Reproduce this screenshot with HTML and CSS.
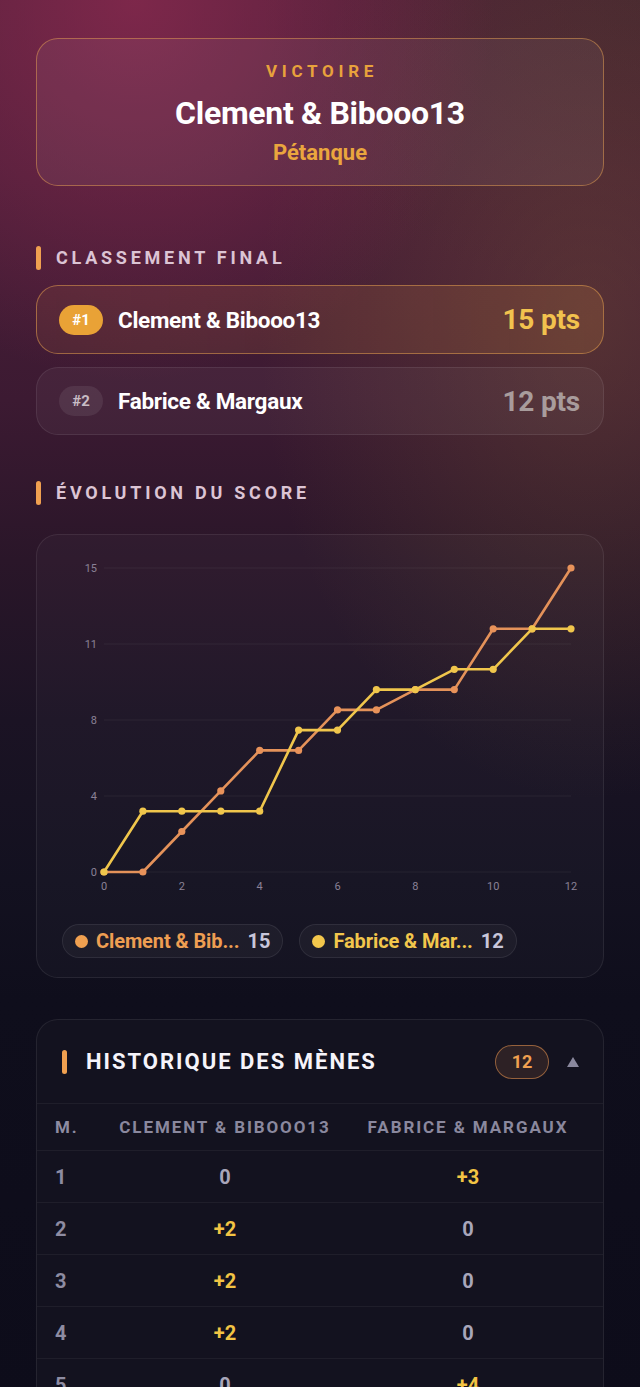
FILE: index.html
```html
<!DOCTYPE html>
<html lang="fr">
<head>
<meta charset="utf-8">
<title>Victoire - Pétanque</title>
<link rel="stylesheet" href="styles.css">
</head>
<body>
<main class="page">
  <section class="hero">
    <div class="hero-label">VICTOIRE</div>
    <div class="hero-title">Clement &amp; Bibooo13</div>
    <div class="hero-sub">Pétanque</div>
  </section>

  <h2 class="section-title s-rank"><span class="bar"></span>CLASSEMENT FINAL</h2>
  <div class="ranking">
    <div class="rank-row first">
      <span class="rank-badge">#1</span>
      <span class="rank-name">Clement &amp; Bibooo13</span>
      <span class="rank-pts">15 pts</span>
    </div>
    <div class="rank-row second">
      <span class="rank-badge">#2</span>
      <span class="rank-name">Fabrice &amp; Margaux</span>
      <span class="rank-pts">12 pts</span>
    </div>
  </div>

  <h2 class="section-title s-evo"><span class="bar"></span>ÉVOLUTION DU SCORE</h2>
  <div class="chart-card">
    <svg class="chart" width="566" height="366" viewBox="0 0 566 366">
      <g class="grid">
        <line x1="67" y1="33" x2="534" y2="33"/>
        <line x1="67" y1="109" x2="534" y2="109"/>
        <line x1="67" y1="185" x2="534" y2="185"/>
        <line x1="67" y1="261" x2="534" y2="261"/>
        <line x1="67" y1="337" x2="534" y2="337"/>
      </g>
      <g class="ylab">
        <text x="60" y="37">15</text>
        <text x="60" y="113">11</text>
        <text x="60" y="189">8</text>
        <text x="60" y="265">4</text>
        <text x="60" y="341">0</text>
      </g>
      <g class="xlab">
        <text x="67" y="355">0</text>
        <text x="144.8" y="355">2</text>
        <text x="222.7" y="355">4</text>
        <text x="300.5" y="355">6</text>
        <text x="378.3" y="355">8</text>
        <text x="456.2" y="355">10</text>
        <text x="534" y="355">12</text>
      </g>
      <polyline class="line orange" points="67,337 105.9,337 144.8,296.5 183.8,255.9 222.7,215.4 261.6,215.4 300.5,174.9 339.4,174.9 378.3,154.6 417.3,154.6 456.2,93.8 495.1,93.8 534,33"/>
      <g class="dots orange-dots">
        <circle cx="67" cy="337" r="3.6"/><circle cx="105.9" cy="337" r="3.6"/><circle cx="144.8" cy="296.5" r="3.6"/><circle cx="183.8" cy="255.9" r="3.6"/><circle cx="222.7" cy="215.4" r="3.6"/><circle cx="261.6" cy="215.4" r="3.6"/><circle cx="300.5" cy="174.9" r="3.6"/><circle cx="339.4" cy="174.9" r="3.6"/><circle cx="378.3" cy="154.6" r="3.6"/><circle cx="417.3" cy="154.6" r="3.6"/><circle cx="456.2" cy="93.8" r="3.6"/><circle cx="495.1" cy="93.8" r="3.6"/><circle cx="534" cy="33" r="3.6"/>
      </g>
      <polyline class="line yellow" points="67,337 105.9,276.2 144.8,276.2 183.8,276.2 222.7,276.2 261.6,195.1 300.5,195.1 339.4,154.6 378.3,154.6 417.3,134.3 456.2,134.3 495.1,93.8 534,93.8"/>
      <g class="dots yellow-dots">
        <circle cx="67" cy="337" r="3.6"/><circle cx="105.9" cy="276.2" r="3.6"/><circle cx="144.8" cy="276.2" r="3.6"/><circle cx="183.8" cy="276.2" r="3.6"/><circle cx="222.7" cy="276.2" r="3.6"/><circle cx="261.6" cy="195.1" r="3.6"/><circle cx="300.5" cy="195.1" r="3.6"/><circle cx="339.4" cy="154.6" r="3.6"/><circle cx="378.3" cy="154.6" r="3.6"/><circle cx="417.3" cy="134.3" r="3.6"/><circle cx="456.2" cy="134.3" r="3.6"/><circle cx="495.1" cy="93.8" r="3.6"/><circle cx="534" cy="93.8" r="3.6"/>
      </g>
    </svg>
    <div class="legend">
      <div class="pill pill-orange"><span class="dot"></span><span class="pill-name">Clement &amp; Bib...</span><span class="pill-val">15</span></div>
      <div class="pill pill-yellow"><span class="dot"></span><span class="pill-name">Fabrice &amp; Mar...</span><span class="pill-val">12</span></div>
    </div>
  </div>

  <section class="history">
    <div class="history-head">
      <span class="bar"></span>
      <span class="history-title">HISTORIQUE DES MÈNES</span>
      <span class="count">12</span>
      <svg class="caret" width="12" height="10" viewBox="0 0 12 10"><polygon points="6,0 12,10 0,10"/></svg>
    </div>
    <div class="table">
      <div class="tr th"><span class="c1">M.</span><span class="c2">CLEMENT &amp; BIBOOO13</span><span class="c3">FABRICE &amp; MARGAUX</span></div>
      <div class="tr"><span class="c1">1</span><span class="c2">0</span><span class="c3 win">+3</span></div>
      <div class="tr"><span class="c1">2</span><span class="c2 win">+2</span><span class="c3">0</span></div>
      <div class="tr"><span class="c1">3</span><span class="c2 win">+2</span><span class="c3">0</span></div>
      <div class="tr"><span class="c1">4</span><span class="c2 win">+2</span><span class="c3">0</span></div>
      <div class="tr"><span class="c1">5</span><span class="c2">0</span><span class="c3 win">+4</span></div>
      <div class="tr"><span class="c1">6</span><span class="c2 win">+2</span><span class="c3">0</span></div>
      <div class="tr"><span class="c1">7</span><span class="c2">0</span><span class="c3 win">+2</span></div>
      <div class="tr"><span class="c1">8</span><span class="c2 win">+1</span><span class="c3">0</span></div>
      <div class="tr"><span class="c1">9</span><span class="c2">0</span><span class="c3 win">+1</span></div>
      <div class="tr"><span class="c1">10</span><span class="c2 win">+3</span><span class="c3">0</span></div>
      <div class="tr"><span class="c1">11</span><span class="c2">0</span><span class="c3 win">+2</span></div>
      <div class="tr"><span class="c1">12</span><span class="c2 win">+3</span><span class="c3">0</span></div>
    </div>
  </section>
</main>
</body>
</html>
```

FILE: styles.css
```css
* { box-sizing: border-box; }
html, body { margin: 0; padding: 0; }
body {
  font-family: Roboto, "Liberation Sans", sans-serif;
  color: #fff;
  min-height: 1387px;
  background-color: #0d0c1a;
  background-image:
    radial-gradient(ellipse 360px 380px at 21% 0px, rgba(140, 42, 80, 0.75), rgba(140, 42, 80, 0) 100%),
    radial-gradient(ellipse 330px 480px at 92% 320px, rgba(130, 95, 52, 0.32), rgba(130, 95, 52, 0) 100%),
    radial-gradient(ellipse 380px 300px at 100% 0px, rgba(60, 42, 40, 0.55), rgba(60, 42, 40, 0) 100%),
    linear-gradient(180deg, #50203a 0px, #4a1e38 180px, #3c1a32 400px, #2a1629 560px, #1b1324 720px, #131120 880px, #0f0e1c 1000px, #0d0c1a 1400px);
  background-repeat: no-repeat;
}

.page {
  padding: 38px 36px 40px;
  display: flex;
  flex-direction: column;
}

/* Hero */
.hero {
  height: 148px;
  border: 1px solid rgba(230, 160, 80, 0.5);
  border-radius: 22px;
  background: rgba(255, 255, 255, 0.055);
  display: flex;
  flex-direction: column;
  align-items: center;
  padding-top: 22px;
}
.hero-label {
  font-size: 17px;
  font-weight: 700;
  letter-spacing: 4.7px;
  color: #e8a23c;
  line-height: 20px;
  padding-left: 4px;
}
.hero-title {
  font-size: 32px;
  font-weight: 700;
  line-height: 38px;
  margin-top: 13px;
  letter-spacing: -0.3px;
}
.hero-sub {
  font-size: 22px;
  font-weight: 700;
  color: #eaa63e;
  line-height: 26px;
  margin-top: 8px;
}

/* Section titles */
.section-title {
  display: flex;
  align-items: center;
  gap: 15px;
  margin: 0;
  font-size: 18px;
  font-weight: 700;
  letter-spacing: 3.75px;
  color: #dcc4d4;
  line-height: 24px;
}
.bar {
  display: inline-block;
  width: 5px;
  height: 24px;
  border-radius: 3px;
  background: #f0a050;
  flex: none;
}
.s-rank { margin-top: 60px; }
.s-evo { margin-top: 46px; }

/* Ranking */
.ranking {
  display: flex;
  flex-direction: column;
  gap: 13px;
  margin-top: 15px;
}
.rank-row {
  height: 69px;
  border-radius: 22px;
  display: flex;
  align-items: center;
  padding: 0 23px 0 22px;
}
.rank-row.first {
  border: 1px solid rgba(235, 165, 80, 0.5);
  background: linear-gradient(90deg, rgba(240, 150, 70, 0.09), rgba(240, 160, 70, 0.15));
}
.rank-row.second {
  height: 68px;
  border: 1px solid rgba(255, 255, 255, 0.08);
  background: rgba(255, 255, 255, 0.045);
}
.rank-badge {
  width: 44px;
  height: 30px;
  border-radius: 15px;
  display: flex;
  align-items: center;
  justify-content: center;
  font-size: 15px;
  font-weight: 700;
  flex: none;
}
.first .rank-badge { background: #e9a236; color: #fff; }
.second .rank-badge { background: rgba(255, 255, 255, 0.08); color: #c8bcc4; }
.rank-name {
  margin-left: 15px;
  font-size: 22.5px;
  font-weight: 700;
  flex: 1;
  letter-spacing: -0.3px;
}
.rank-pts {
  font-size: 28px;
  font-weight: 700;
  letter-spacing: -0.2px;
}
.first .rank-pts { color: #f2c24e; }
.second .rank-pts { color: #a89c9c; }

/* Chart */
.chart-card {
  margin-top: 29px;
  height: 444px;
  border-radius: 22px;
  border: 1px solid rgba(255, 255, 255, 0.08);
  background: rgba(255, 255, 255, 0.025);
  display: flex;
  flex-direction: column;
}
.chart { display: block; }
.grid line { stroke: rgba(255, 255, 255, 0.06); stroke-width: 1; }
.ylab text { fill: #8a8196; font-size: 11px; text-anchor: end; font-family: Roboto, sans-serif; }
.xlab text { fill: #8a8196; font-size: 11px; text-anchor: middle; font-family: Roboto, sans-serif; }
.line { fill: none; stroke-width: 2.6; stroke-linejoin: round; stroke-linecap: round; }
.line.orange { stroke: #e4925a; }
.line.yellow { stroke: #f0c64c; }
.orange-dots circle { fill: #e8925a; }
.yellow-dots circle { fill: #f0c64c; }

.legend {
  display: flex;
  gap: 16px;
  padding: 23px 0 0 25px;
}
.pill {
  height: 34px;
  border-radius: 17px;
  border: 1px solid rgba(255, 255, 255, 0.08);
  background: rgba(255, 255, 255, 0.035);
  display: flex;
  align-items: center;
  padding: 0 12px 0 12px;
  font-size: 20px;
  font-weight: 700;
}
.dot {
  width: 13px;
  height: 13px;
  border-radius: 50%;
  flex: none;
  margin-right: 8px;
}
.pill-name {
  white-space: nowrap;
  letter-spacing: -0.1px;
}
.pill-val { margin-left: 8px; color: #c8c6da; }
.pill-orange .dot { background: #f0a050; }
.pill-orange .pill-name { color: #ee9e52; }
.pill-yellow .dot { background: #f2c64c; }
.pill-yellow .pill-name { color: #f2c64c; }

/* History */
.history {
  margin-top: 41px;
  border-radius: 22px 22px 0 0;
  border: 1px solid rgba(255, 255, 255, 0.08);
  background: #13121f;
}
.history-head {
  height: 83px;
  display: flex;
  align-items: center;
  padding: 0 24px 0 25px;
}
.history-title {
  margin-left: 19px;
  font-size: 22px;
  font-weight: 700;
  letter-spacing: 2px;
  color: #f6f4fa;
  flex: 1;
}
.count {
  width: 54px;
  height: 34px;
  border-radius: 17px;
  border: 1px solid rgba(235, 150, 80, 0.55);
  background: rgba(235, 150, 80, 0.12);
  color: #f0a050;
  font-size: 18px;
  font-weight: 700;
  display: flex;
  align-items: center;
  justify-content: center;
}
.caret {
  margin-left: 18px;
  fill: #8a889e;
  display: block;
}
.table { display: flex; flex-direction: column; }
.tr {
  display: grid;
  grid-template-columns: 70px 236px 250px;
  align-items: center;
  height: 52px;
  border-top: 1px solid rgba(255, 255, 255, 0.05);
  font-size: 20px;
  font-weight: 700;
  color: #a8a6ba;
}
.tr.th {
  height: 47px;
  font-size: 17px;
  letter-spacing: 1.9px;
  color: #8a889e;
}
.c1 { padding-left: 18px; color: #8e8ca2; }
.c2, .c3 { text-align: center; }
.win { color: #f2c444; }
```
